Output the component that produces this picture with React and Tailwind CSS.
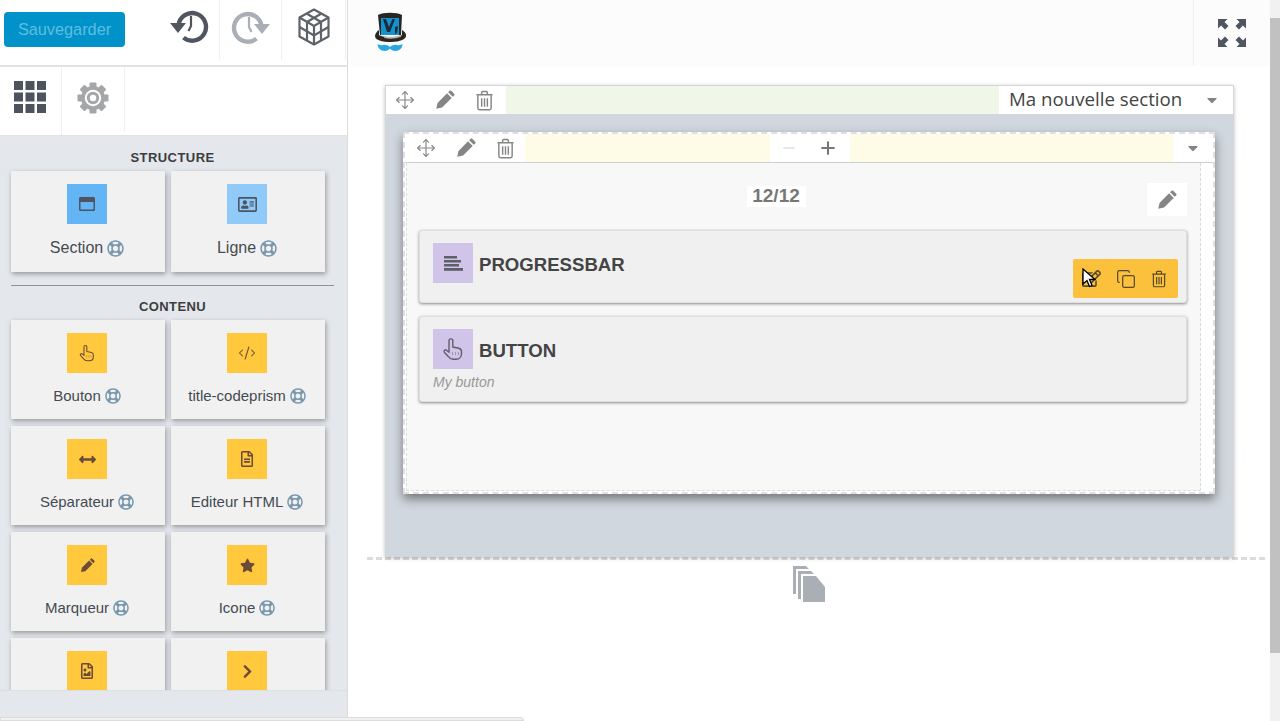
import { CodeXml, Copy, Move, Plus, Minus } from "lucide-react";
import {
  FaArrowsAltH,
  FaChevronRight,
  FaRegAddressCard,
  FaRegEdit,
  FaRegFileAlt,
  FaRegFileImage,
  FaRegLifeRing,
  FaRegWindowMaximize,
  FaStar,
  FaCaretDown,
} from "react-icons/fa";

function PencilIcon({ size = 20, className }) {
  return (
    <svg viewBox="0 0 24 24" fill="currentColor" width={size} height={size} className={className}>
      <path d="M1.500 22.500l1.500-7L14.500 4l5.500 5.500L8.500 21z" />
      <path d="M15.800 2.700 17.500 1c.6-.6 1.400-.6 2 0l3.500 3.500c.6.6.6 1.400 0 2l-1.700 1.700z" />
    </svg>
  );
}

function HandIcon({ size = 18, className }) {
  return (
    <svg viewBox="0 0 24 24" fill="none" stroke="currentColor" strokeWidth="1.400" strokeLinejoin="round" width={size} height={size} className={className}>
      <path d="M8 13V3.800a1.900 1.900 0 0 1 3.800 0V10l6 1.300c1.700.4 2.700 1.700 2.700 3.400v1.800c0 3.300-2.200 5.800-5.300 5.800h-3c-2.100 0-3.600-.9-4.700-2.600L3.300 15.200c-.9-1.400.9-3 2.200-2L8 15.200z" />
      <path d="M11.500 15v3M14.500 15v3M17.500 15v3" strokeWidth="0.800" opacity="0.6" />
    </svg>
  );
}

const contentBlocks = [
  { label: "Bouton", Icon: HandIcon, size: 18 },
  { label: "title-codeprism", Icon: CodeXml, size: 18, strokeWidth: 1.4 },
  { label: "Séparateur", Icon: FaArrowsAltH, size: 17 },
  { label: "Editeur HTML", Icon: FaRegFileAlt, size: 16 },
  { label: "Marqueur", Icon: PencilIcon, size: 15 },
  { label: "Icone", Icon: FaStar, size: 15 },
  { label: "", Icon: FaRegFileImage, size: 16 },
  { label: "", Icon: FaChevronRight, size: 15 },
];

function TrashIcon({ className }) {
  return (
    <svg viewBox="0 0 20 22" fill="none" stroke="currentColor" strokeWidth="1.5" className={className}>
      <path d="M1.500 5h17M7 4.500V2.500c0-.6.4-1 1-1h4c.6 0 1 .4 1 1v2" />
      <path d="M3 5.500V19c0 1 .7 1.700 1.700 1.700h10.600c1 0 1.700-.7 1.700-1.700V5.500" />
      <path d="M7 8.500v9M10 8.500v9M13 8.500v9" />
    </svg>
  );
}

function HistoryIcon({ flip, className }) {
  return (
    <svg viewBox="0 0 40 40" fill="none" className={`${className} ${flip ? "-scale-x-100" : ""}`}>
      <path d="M9.500 19a13.800 13.800 0 1 1 5 12.600" stroke="currentColor" strokeWidth="4.400" />
      <path d="M1 17h16l-8 10z" fill="currentColor" />
      <path d="M22 10v10l-2.500 5" stroke="currentColor" strokeWidth="2.200" />
    </svg>
  );
}

function CubeIcon({ className }) {
  return (
    <svg viewBox="0 0 32 38" fill="none" stroke="currentColor" strokeWidth="2.200" className={className}>
      <path d="M16 1.500 30.500 9.500v19L16 36.500 1.500 28.500v-19z" strokeLinejoin="round" />
      <path d="M1.500 9.500 16 18l14.500-8.500M16 18v18.500" />
      <path d="M8.500 5.500 23 14v18.500M23.500 5.500 9 14v18.500" />
      <path d="M1.500 19 16 27.500 30.500 19" />
    </svg>
  );
}

function GridIcon({ className }) {
  const cells = [0, 11.5, 23];
  return (
    <svg viewBox="0 0 32 32" fill="currentColor" className={className}>
      {cells.map((y) => cells.map((x) => <rect key={`${x}-${y}`} x={x} y={y} width="9" height="9" />))}
    </svg>
  );
}

function GearIcon({ className }) {
  const teeth = [0, 45, 90, 135];
  return (
    <svg viewBox="0 0 32 32" className={className}>
      <g fill="currentColor">
        {teeth.map((a) => (
          <rect key={a} x="12.500" y="0.500" width="7" height="31" rx="1" transform={`rotate(${a} 16 16)`} />
        ))}
        <circle cx="16" cy="16" r="12" />
      </g>
      <circle cx="16" cy="16" r="8.200" fill="#fff" />
      <circle cx="16" cy="16" r="6.200" fill="currentColor" />
      <circle cx="16" cy="16" r="3.200" fill="#fff" />
    </svg>
  );
}

function BarsIcon({ className }) {
  return (
    <svg viewBox="0 0 19 15" fill="currentColor" className={className}>
      <rect width="13" height="2.500" />
      <rect y="4" width="17" height="2.500" />
      <rect y="8" width="15" height="2.500" />
      <rect y="12" width="19" height="2.800" />
    </svg>
  );
}

function ExpandIcon({ className }) {
  return (
    <svg viewBox="0 0 28 28" fill="currentColor" className={className}>
      <path d="M0 0h9.500L6.500 3l4 4-3.500 3.500-4-4-3 3z" />
      <path d="M28 0h-9.500l3 3-4 4 3.500 3.500 4-4 3 3z" />
      <path d="M0 28h9.500l-3-3 4-4L7 17.500l-4 4-3-3z" />
      <path d="M28 28h-9.500l3-3-4-4 3.500-3.500 4 4 3-3z" />
    </svg>
  );
}

function FilesIcon({ className }) {
  return (
    <svg viewBox="0 0 32 36" fill="currentColor" className={className}>
      <path d="M0 0h13l3 3H3v25H0z" />
      <path d="M5 5h13l3 3H8v25H5z" />
      <path d="M10 10h13l9 11v15H10z" />
    </svg>
  );
}

function HatLogo() {
  return (
    <svg viewBox="0 0 32 40" className="h-10 w-8">
      <path d="M3 3c5-3 19-3 24 0l-1 20H5z" fill="#2a2622" />
      <path d="M6 6h18v17H6z" fill="#1591cf" />
      <path d="M8 7l4 13h3l5-13h-2.500L14 15 11 7z" fill="#1c2d3a" />
      <path d="M20 15l3-1-1 7-2 1z" fill="#1c2d3a" />
      <path d="M4 18c-2 1-4 4-4 6 0 4 7 6 16 6s16-3 15-7c0-2-2-4-4-5v5c-5 3-18 3-23 0z" fill="#2a2622" />
      <path d="M9 24c5 1.500 11 1 17-1v1.800c-5 2-12 2.500-17 1z" fill="#b9b6b2" />
      <path d="M15 35c-2-2-5-2.500-7-2-2 .5-4 0-5.500-1 .3 4 3 7 7 7 2.500 0 4.500-1 5.500-2.500 1 1.500 3 2.500 5.500 2.500 4 0 7-3 7-7-1.500 1-3.500 1.500-5.500 1-2-.5-5 0-7 2z" fill="#29a8e0" />
    </svg>
  );
}

function MouseCursor() {
  return (
    <svg viewBox="0 0 14 20" className="absolute left-[9px] top-[9px] h-[20px] w-[14px]">
      <path d="M1 1v15l4-3.500 2.500 6 2.500-1-2.500-6H13z" fill="#fff" stroke="#000" strokeWidth="1.300" />
    </svg>
  );
}

function WidgetCard({ label, Icon, size, strokeWidth, color, tall }) {
  return (
    <div className={`flex w-[154px] flex-col items-center bg-[#f1f1f1] pr-[2px] pt-[13px] shadow-[1px_2px_5px_rgba(0,0,0,0.35)] ${tall ? "h-[101px]" : "h-[99px]"}`}>
      <div className={`flex h-10 w-10 shrink-0 items-center justify-center text-[#4e5560] ${color}`}>
        <Icon size={size} strokeWidth={strokeWidth} />
      </div>
      {label && (
        <div className={`flex items-center gap-[4px] text-[#444b52] ${tall ? "mt-[12px] text-base" : "mt-[13px] text-[15px] leading-[20px]"}`}>
          {label}
          <FaRegLifeRing size={tall ? 17 : 16} className="text-[#7a98ad]" />
        </div>
      )}
    </div>
  );
}

function ToolButtons({ inner }) {
  return (
    <div className={`flex h-full w-[120px] shrink-0 items-center gap-[20px] bg-white text-[#858585] ${inner ? "pl-[11px]" : "pl-[9px]"}`}>
      <Move size={20} strokeWidth={1.400} />
      <PencilIcon size={20} />
      <TrashIcon className="h-[21px] w-[19px]" />
    </div>
  );
}

function Sidebar() {
  return (
    <aside className="flex h-[718px] w-[348px] shrink-0 flex-col border-r border-[#dcdcdc] bg-[#e4e7eb]">
      <div className="flex h-[67px] shrink-0 items-start border-b-2 border-[#e2e2e2] bg-white">
        <div className="flex h-[60px] w-[220px] items-start border-r border-[#f0f0f0] pl-1 pt-3">
          <button className="h-[35px] w-[121px] rounded-[4px] bg-[#0092c8] text-[16.3px] text-[#5fbde0]">Sauvegarder</button>
          <HistoryIcon className="ml-[44px] mt-[-6px] h-10 w-10 text-[#50565e]" />
        </div>
        <div className="flex h-[60px] w-[62px] items-center justify-center border-r border-[#f0f0f0] pb-[6px]">
          <HistoryIcon flip className="h-10 w-10 text-[#a9afb4]" />
        </div>
        <div className="flex h-[60px] w-[64px] items-center justify-center border-r border-[#f0f0f0] pb-[6px] pl-[1px]">
          <CubeIcon className="h-[38px] w-8 text-[#5e6369]" />
        </div>
      </div>
      <div className="flex h-[69px] shrink-0 border-b border-[#e2e2e2] bg-white">
        <div className="flex w-[62px] items-start justify-center border-r border-[#f0f0f0] pr-[2px] pt-[14px]">
          <GridIcon className="h-8 w-8 text-[#4d545d]" />
        </div>
        <div className="flex h-[64px] w-[63px] items-start justify-center border-r border-[#f0f0f0] pt-[15px]">
          <GearIcon className="h-8 w-8 text-[#a4a6a8]" />
        </div>
      </div>
      <div className="h-[554px] shrink-0 overflow-hidden">
        <h4 className="mt-[15px] pr-[2px] text-center text-[13px] leading-[14px] font-bold tracking-[0.45px] text-[#3d3d3d]">STRUCTURE</h4>
        <div className="mt-[6px] flex gap-[6px] pl-[11px]">
          <WidgetCard label="Section" Icon={FaRegWindowMaximize} size={16} color="bg-[#64b5f6]" tall />
          <WidgetCard label="Ligne" Icon={FaRegAddressCard} size={19} color="bg-[#90caf9]" tall />
        </div>
        <hr className="ml-[11px] mt-[13px] w-[323px] border-t border-[#8f9396]" />
        <h4 className="mt-[14px] pr-[2px] text-center text-[13px] leading-[14px] font-bold tracking-[0.4px] text-[#3d3d3d]">CONTENU</h4>
        <div className="mt-[6px] grid w-[325px] grid-cols-[154px_154px] gap-x-[6px] gap-y-[7px] pl-[11px]">
          {contentBlocks.map((b, i) => (
            <WidgetCard key={i} {...b} color="bg-[#ffc83d] !text-[#6a4b3a]" />
          ))}
        </div>
      </div>
      <div className="h-[28px] shrink-0 border-t border-[#dcdfe3] bg-[#e4e7eb]" />
    </aside>
  );
}

function ElementCard({ title, icon, subtitle, height, children }) {
  return (
    <div className={`relative rounded-[3px] border border-[#e0e0e0] bg-[#f0f0f0] pl-[13px] pt-3 shadow-[0_1px_3px_rgba(0,0,0,0.45)] ${height}`}>
      <div className="flex items-center gap-[6px]">
        <div className="flex h-10 w-10 items-center justify-center bg-[#d1c4e9] text-[#5f5f68]">{icon}</div>
        <span className="pt-[3px] text-[18.6px] font-bold text-[#444]">{title}</span>
      </div>
      {subtitle && <div className="mt-[4px] text-[14px] leading-[18px] text-[#999] italic">{subtitle}</div>}
      {children}
    </div>
  );
}

function Canvas() {
  return (
    <main className="flex h-[721px] w-[922px] shrink-0 flex-col bg-white">
      <div className="flex h-[66px] shrink-0 items-start justify-between bg-[#fcfcfc]">
        <div className="ml-[27px] mt-[12px]">
          <HatLogo />
        </div>
        <div className="flex h-[66px] w-[77px] items-start justify-center border-l border-[#f0f0f0] pt-[19px] text-[#4f5660]">
          <ExpandIcon className="h-7 w-7" />
        </div>
      </div>

      <div className="ml-[19px] mt-[19px] w-[898px] border-b-[3px] border-dashed border-[#dcdcdc] pl-[18px]">
        <section className="h-[472px] w-[849px] border border-dashed border-[#d6d6d6] bg-[#d0d7de] shadow-[0_1px_4px_rgba(0,0,0,0.25)]">
          <div className="flex h-[28px] items-center bg-white">
            <ToolButtons />
            <div className="h-full flex-1 bg-[#f1f7e8]" />
            <div className="flex h-full w-[234px] items-center bg-white pb-[2px] pl-[10px] pr-[13px] font-['Open_Sans',sans-serif] text-[18.7px] text-[#444]">
              <span className="flex-1">Ma nouvelle section</span>
              <FaCaretDown size={16} className="mt-[2px] text-[#858585]" />
            </div>
          </div>

          <div className="ml-[17px] mt-[18px] h-[362px] w-[812px] border-2 border-dashed border-[#e0e0e0] bg-white shadow-[0_5px_10px_rgba(0,0,0,0.45)]">
            <div className="flex h-[29px] border-b border-[#cfcfcf]">
              <ToolButtons inner />
              <div className="w-[245px] bg-[#fefbe6]" />
              <div className="flex w-[80px] items-center justify-between bg-white pl-[10px] pr-[12px] text-[#777]">
                <Minus size={18} className="text-[#e0e0e0]" />
                <Plus size={20} strokeWidth={2.500} />
              </div>
              <div className="flex-1 bg-[#fefbe6]" />
              <div className="flex w-[40px] items-center justify-center bg-white text-[#858585]">
                <FaCaretDown size={16} />
              </div>
            </div>
            <div className="ml-[1px] h-[328px] w-[795px] border-x border-b border-dashed border-[#dcdcdc] bg-[#f8f8f8] pl-[12px] pr-[13px] pt-[20px]">
              <div className="relative flex h-[47px] items-start justify-center">
                <span className="ml-[-54px] mt-[3px] flex h-[21px] w-[59px] items-center justify-center bg-white text-[19px] font-bold text-[#777]">12/12</span>
                <div className="absolute right-0 top-0 flex h-[33px] w-10 items-center justify-center bg-white text-[#858585]">
                  <PencilIcon size={20} />
                </div>
              </div>
              <div className="flex flex-col gap-[13px]">
                <ElementCard title="PROGRESSBAR" icon={<BarsIcon className="h-[15px] w-[19px]" />} height="h-[73px]">
                  <div className="absolute bottom-[4px] right-[8px] flex h-[39px] w-[105px] items-center rounded-[2px] bg-[#fbc13c] pl-[9px] text-[#5a4a2c]">
                    <FaRegEdit size={19} />
                    <Copy size={20} strokeWidth={1.500} className="ml-[15px]" />
                    <TrashIcon className="ml-[15px] h-[18px] w-[16px]" />
                    <MouseCursor />
                  </div>
                </ElementCard>
                <ElementCard title="BUTTON" icon={<HandIcon size={24} />} subtitle="My button" height="h-[86px]" />
              </div>
            </div>
          </div>
        </section>
      </div>

      <div className="mt-[6px] flex justify-center">
        <FilesIcon className="h-[36px] w-[32px] text-[#a9afb4]" />
      </div>
    </main>
  );
}

export default function App() {
  return (
    <div className="relative flex h-[721px] w-[1280px] overflow-hidden bg-white font-['Liberation_Sans',Arial,sans-serif]">
      <Sidebar />
      <Canvas />
      <div className="h-[721px] w-[10px] shrink-0 bg-[#f1f1f1] pt-[18px]">
        <div className="h-[635px] bg-[#c1c1c1]" />
      </div>
      {/* bottom scroll bar tab */}
      <div className="absolute bottom-0 left-0 h-[4px] w-[524px] rounded-tr-[4px] border border-[#dcdcdc] bg-[#f1f1f1]" />
    </div>
  );
}
